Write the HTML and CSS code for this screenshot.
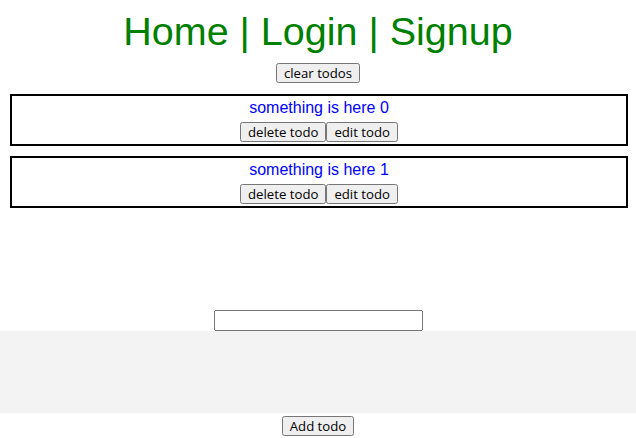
FILE: index.html
```html
<!DOCTYPE html>
<html>
<head>
<meta charset="utf-8">
<link rel="stylesheet" href="styles.css">
</head>
<body>
<div class="app">
  <h1 class="nav">Home | Login | Signup</h1>
  <div class="clear-row"><button class="btn">clear todos</button></div>
  <div class="todos">
    <div class="todo">
      <div class="todo-text">something is here 0</div>
      <div class="todo-actions"><button class="btn">delete todo</button><button class="btn">edit todo</button></div>
    </div>
    <div class="todo">
      <div class="todo-text">something is here 1</div>
      <div class="todo-actions"><button class="btn">delete todo</button><button class="btn">edit todo</button></div>
    </div>
  </div>
  <div class="form">
    <input class="field" type="text">
    <div class="panel"></div>
    <button class="btn">Add todo</button>
  </div>
</div>
</body>
</html>
```
FILE: styles.css
```css
html, body { margin: 0; padding: 0; background: #fff; }
body { font-family: "Liberation Sans", Arial, sans-serif; }
.app { display: flex; flex-direction: column; align-items: stretch; }
.nav {
  margin: 8px 0 0 0;
  font-size: 39.5px;
  font-weight: normal;
  color: #008000;
  text-align: center;
  line-height: 46px;
}
.btn {
  font-family: "Open Sans", "Noto Sans", sans-serif;
  font-size: 13.2px;
  line-height: 14px;
  color: #000;
}
.clear-row { display: flex; justify-content: center; margin-top: 9px; }
.todos { display: flex; flex-direction: column; gap: 10px; padding: 11px 8px 0 10px; }
.todo {
  border: 2px solid #000;
  display: flex; flex-direction: column; align-items: center;
  padding: 2px 0;
}
.todo-text { color: #0000ff; font-size: 16px; line-height: 20px; margin-bottom: 4px; }
.todo-actions { display: flex; }
.form { display: flex; flex-direction: column; align-items: center; margin-top: 102px; }
.field { width: 201px; height: 15px; }
.panel { align-self: stretch; height: 82px; background: #f3f3f3; }
.form .btn { margin-top: 3px; }
```
